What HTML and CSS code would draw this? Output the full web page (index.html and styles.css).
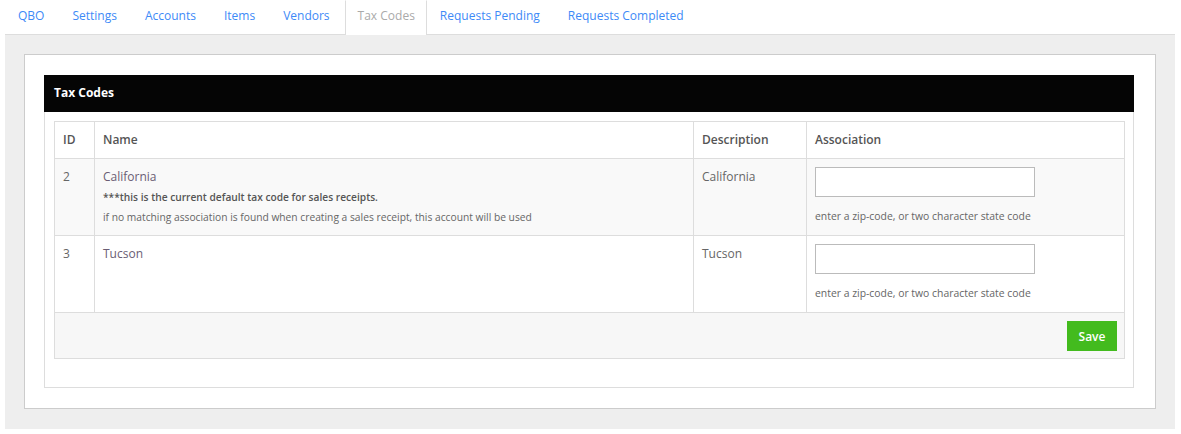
FILE: index.html
```html
<!DOCTYPE html>
<html>
<head>
<meta charset="utf-8">
<link rel="stylesheet" href="styles.css">
</head>
<body>
<div class="page">
  <ul class="tabs">
    <li><a href="#">QBO</a></li>
    <li><a href="#">Settings</a></li>
    <li><a href="#">Accounts</a></li>
    <li><a href="#">Items</a></li>
    <li><a href="#">Vendors</a></li>
    <li class="active"><a href="#">Tax Codes</a></li>
    <li><a href="#">Requests Pending</a></li>
    <li><a href="#">Requests Completed</a></li>
  </ul>
  <div class="content">
    <div class="card">
      <div class="panel">
        <div class="panel-head">Tax Codes</div>
        <div class="panel-body">
          <table class="grid">
            <thead>
              <tr>
                <th class="c-id">ID</th>
                <th class="c-name">Name</th>
                <th class="c-desc">Description</th>
                <th class="c-assoc">Association</th>
              </tr>
            </thead>
            <tbody>
              <tr class="odd">
                <td>2</td>
                <td>
                  <div class="name">California</div>
                  <div class="note-strong">***this is the current default tax code for sales receipts.</div>
                  <div class="note">if no matching association is found when creating a sales receipt, this account will be used</div>
                </td>
                <td>California</td>
                <td>
                  <input class="field" type="text">
                  <div class="help">enter a zip-code, or two character state code</div>
                </td>
              </tr>
              <tr>
                <td>3</td>
                <td><div class="name">Tucson</div></td>
                <td>Tucson</td>
                <td>
                  <input class="field" type="text">
                  <div class="help">enter a zip-code, or two character state code</div>
                </td>
              </tr>
            </tbody>
            <tfoot>
              <tr>
                <td colspan="4" class="foot"><button class="save">Save</button></td>
              </tr>
            </tfoot>
          </table>
        </div>
      </div>
    </div>
  </div>
</div>
</body>
</html>
```

FILE: styles.css
```css
* { box-sizing: border-box; }
html, body { margin: 0; padding: 0; background: #fff; }
body {
  font-family: "Open Sans", "Liberation Sans", sans-serif;
  font-size: 12px;
  color: #666;
}
.page { padding: 0 6px 5px 5px; }

.tabs {
  list-style: none;
  margin: 0;
  padding: 0;
  display: flex;
  height: 35px;
  border-bottom: 1px solid #ddd;
}
.tabs li { margin-bottom: -1px; }
.tabs a {
  display: block;
  height: 35px;
  line-height: 30px;
  padding: 0 14px 0 12px;
  color: #3d8af7;
  text-decoration: none;
  border: 1px solid transparent;
  border-bottom: 0;
}
.tabs .active a {
  color: #aaa;
  background: #fff;
  border-color: #ddd;
  border-top-color: transparent;
  padding: 0 11px 0 12px;
}

.content {
  background: #eee;
  padding: 19px 19px 20px 19px;
}
.card {
  background: #fff;
  border: 1px solid #ccc;
  padding: 20px 21px 20px 19px;
}
.panel {
  border: 1px solid #ddd;
  padding-bottom: 28px;
}
.panel-head {
  background: #050505;
  color: #fff;
  font-weight: 700;
  font-size: 12px;
  height: 37px;
  line-height: 36px;
  padding: 0 10px;
  margin: -1px -1px 0 -1px;
}
.panel-body { padding: 9px 8px 0 9px; }

.grid {
  width: 100%;
  border-collapse: collapse;
  border: 1px solid #ddd;
}
.grid th, .grid td {
  border: 1px solid #ddd;
  padding: 8px 8px 8px 8px;
  line-height: 20px;
  vertical-align: top;
  text-align: left;
}
.grid th {
  color: #555;
  font-weight: 600;
  background: #fff;
}
.c-id { width: 40px; }
.c-desc { width: 113px; }
.c-assoc { width: 318px; }
.grid tbody tr.odd td { background: #f9f9f9; }
.grid tbody td { height: 77px; }
.name { color: #6a5d74; }
.note-strong { color: #555; font-weight: 600; font-size: 10.2px; }
.note { font-size: 10.25px; }
.field {
  display: block;
  width: 220px;
  height: 30px;
  border: 1px solid #bbb;
  background: #fff;
  margin: 0;
  padding: 0 6px;
}
.help { font-size: 10.4px; margin-top: 9px; }
.grid td.foot {
  background: #f7f7f7;
  text-align: right;
  padding: 8px 7px 7px 8px;
  line-height: 0;
}
.save {
  width: 50px;
  height: 30px;
  border: 0;
  background: #43bb1e;
  color: #fff;
  font-family: "Open Sans", "Liberation Sans", sans-serif;
  font-weight: 600;
  font-size: 12px;
  padding: 0;
}
```
